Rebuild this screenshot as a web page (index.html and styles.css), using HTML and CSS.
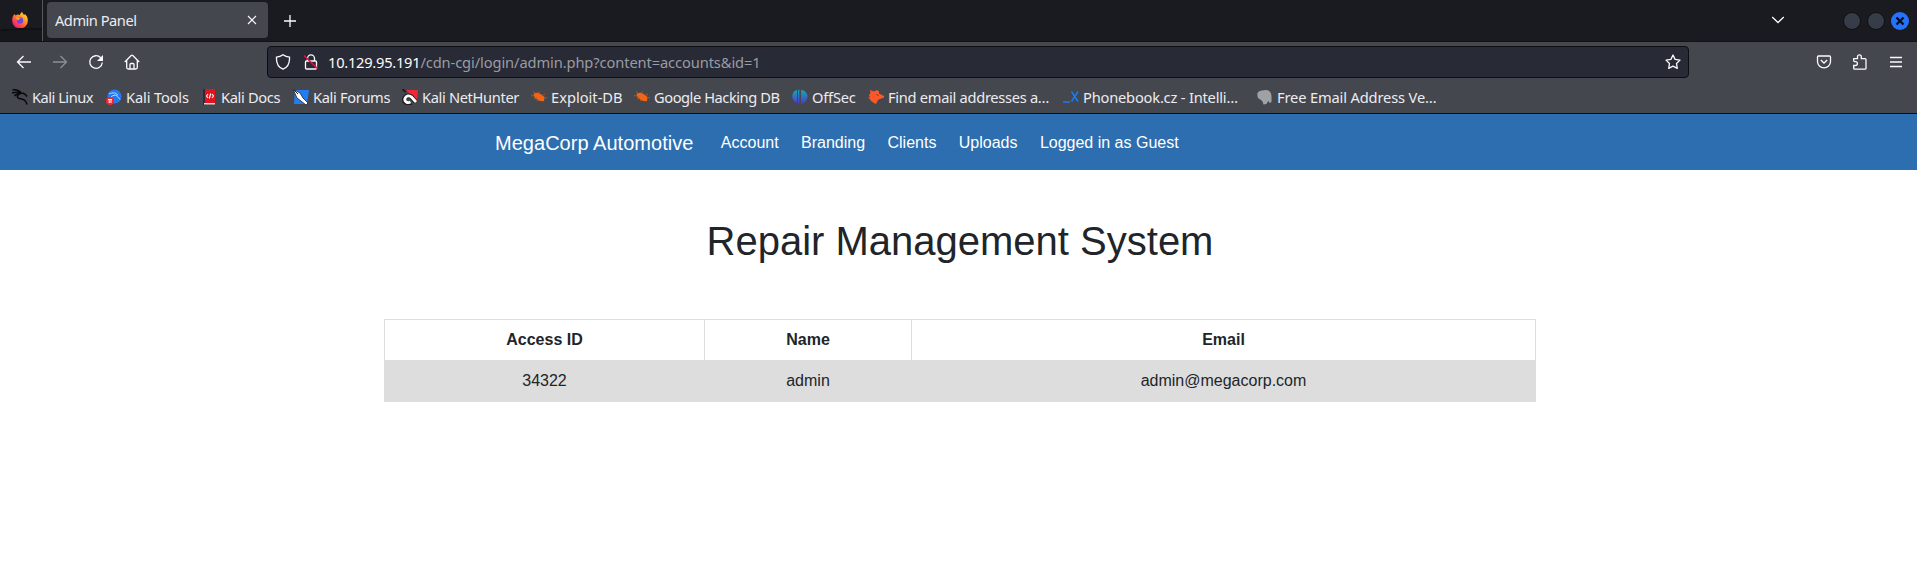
FILE: index.html
```html
<!DOCTYPE html>
<html lang="en">
<head>
<meta charset="utf-8">
<title>Admin Panel</title>
<link rel="stylesheet" href="styles.css">
</head>
<body>
<header class="browser">
  <div class="tabbar">
    <div class="fx">
      <svg width="16" height="16" viewBox="0 0 16 16"><defs><linearGradient id="ff" x1="1" y1="0" x2="0.2" y2="1"><stop offset="0" stop-color="#fff04a"/><stop offset=".4" stop-color="#ff9a1f"/><stop offset=".75" stop-color="#ff4050"/><stop offset="1" stop-color="#e3158a"/></linearGradient></defs><path fill="url(#ff)" d="M1 4l1.500-2 1 1.500 1.500-.8C6 2.400 7 3 8 3c0-1.500 1-2.500 2.300-3 .2 1.600 1.200 2.300 2 3l.6-1C15 4 16 6 15.800 9A7.800 7.300 0 0 1 .2 9C0 7 .4 5.500 1 4z"/><circle cx="8" cy="8.500" r="3.200" fill="#7542e5"/><path d="M3.500 5.500c2-1 4-.5 5 1L6.500 8c-1 .7-1.600 0-3-2.500z" fill="#ff9a28"/></svg>
    </div>
    <div class="tab"><span class="tab-title">Admin Panel</span>
      <svg width="10" height="10" viewBox="0 0 10 10"><path d="M1 1l8 8M9 1L1 9" class="line thin"/></svg>
    </div>
    <svg class="plus" width="12" height="12" viewBox="0 0 12 12"><path d="M6 0v12M0 6h12" class="line"/></svg>
    <svg class="chev" width="14" height="8" viewBox="0 0 14 8"><path d="M1.200 1l5.800 5.500L12.800 1" class="line"/></svg>
    <div class="winbtns"><i class="win"></i><i class="win"></i><i class="win close"><svg width="10" height="10" viewBox="0 0 10 10"><path d="M1.500 1.500l7 7M8.500 1.500l-7 7" stroke="#080d18" stroke-width="2.300"/></svg></i></div>
  </div>
  <div class="toolbar">
    <div class="navbtns">
      <svg width="16" height="16" viewBox="0 0 16 16"><path d="M15 8H1.500M7.500 2L1.500 8l6 6" class="line"/></svg>
      <svg class="dim" width="16" height="16" viewBox="0 0 16 16"><path d="M1 8h13.500M8.500 2l6 6-6 6" class="line"/></svg>
      <svg width="16" height="16" viewBox="0 0 16 16"><path d="M12.700 3.800A6.300 6.300 0 1 0 14.300 8.500" class="line"/><path d="M15 1v6H9z" fill="#fbfbfe"/></svg>
      <svg width="16" height="16" viewBox="0 0 16 16"><path d="M.8 8L7.200 1.500q.8-.7 1.600 0L15.200 8M2.700 6.500v7q0 1.500 1.500 1.500h7.600q1.500 0 1.500-1.500v-7M6 15v-4.500q0-1 1-1h2q1 0 1 1V15" class="line"/></svg>
    </div>
    <div class="urlbar">
      <svg width="16" height="16" viewBox="0 0 16 16"><path d="M8 .8c2 1.500 4 2.200 6.500 2.400.3 5-1.300 10-6.500 12C2.800 13.200 1.200 8.200 1.500 3.200 4 3 6 2.300 8 .8z" class="line"/></svg>
      <svg class="lock" width="16" height="16" viewBox="0 0 16 16"><path d="M4.500 7V4.500a3.500 3.700 0 0 1 7 0V7M3.500 7h9q1 0 1 1v6q0 1-1 1h-9q-1 0-1-1V8q0-1 1-1z" class="line"/><path d="M1 1.500l13.500 13" stroke="#e80d43" stroke-width="1.600"/></svg>
      <span class="url"><b class="host">10.129.95.191</b>/cdn-cgi/login/admin.php?content=accounts&amp;id=1</span>
      <svg class="star" width="16" height="16" viewBox="0 0 16 16"><path d="M8 1l2.100 4.400 4.900.7-3.500 3.400.8 4.900L8 12.100l-4.300 2.300.8-4.900L1 6.100l4.900-.7z" class="line" stroke-linejoin="round"/></svg>
    </div>
    <div class="tools">
      <svg width="16" height="16" viewBox="0 0 16 16"><path d="M2.500 2h11q1 0 1 1v4.500a6.500 6.300 0 0 1-13 0V3q0-1 1-1zM4.800 6L8 9l3.200-3" class="line"/></svg>
      <svg width="16" height="16" viewBox="0 0 16 16"><path d="M1.700 6.500V4.700h3.800V2.700a1.900 1.900 0 0 1 3.800 0v2h3.700q1 0 1 1v8.500q0 1-1 1H2.700q-1 0-1-1V11.500h1.800a1.900 1.900 0 0 0 0-3.800q-1.800 0-1.800-1.200z" class="line"/></svg>
      <svg width="16" height="16" viewBox="0 0 16 16"><path d="M2 3.500h12M2 8h12M2 12.500h12" class="line"/></svg>
    </div>
  </div>
  <nav class="bookmarks">
    <div class="bm b1"><svg width="16" height="16" viewBox="0 0 16 16"><path d="M.5 1C3 .5 7 1.500 9.500 4M0 4c3-1 6-1.500 9.500.2M2.500 7C5 4.500 8 4 12 4.500M9 4.500c-4 1-5 4-1.500 5 4 .8 6.500 1.500 7.500 6M11 4c1.500.5 2.500 1 4 3.500" fill="none" stroke="#08090b" stroke-width="1.500"/></svg><span>Kali Linux</span></div>
    <div class="bm b2"><svg width="16" height="16" viewBox="0 0 16 16"><circle cx="8.500" cy="7.500" r="7" fill="#2878ed"/><path d="M3 5c4-2 7-1 9 1M5 8c2-2 4-2 6-1.500 0 2 2 1.500 3 4" fill="none" stroke="#b9dcff"/><circle cx="4" cy="12" r="4" fill="#ef2630"/><path d="M2 10.500h4M3.200 10.500V14M5 10.500V14" stroke="#fff"/></svg><span>Kali Tools</span></div>
    <div class="bm b3"><svg width="16" height="16" viewBox="0 0 16 16"><path fill="#3a2440" d="M2 0h3v16H2z"/><path fill="#e3131b" d="M4 0h10v14H4z"/><path fill="#d8d9db" d="M3 14h11v1.500H3z"/><path d="M7 5L5.500 7 7 9M11 5l1.500 2L11 9M9.700 4.500l-1.400 5" fill="none" stroke="#fff" stroke-width="1.100"/></svg><span>Kali Docs</span></div>
    <div class="bm b4"><svg width="16" height="16" viewBox="0 0 16 16"><path fill="#247cf4" d="M2 1h14l-2 14H1z"/><path d="M0 0l7 4 3 5 5 5-2 2-5-4-4-3z" fill="#fff" stroke="#202126" stroke-width=".8"/><path d="M1 1l4 4" stroke="#202126"/></svg><span>Kali Forums</span></div>
    <div class="bm b5"><svg width="16" height="16" viewBox="0 0 16 16"><path fill="#ed2735" d="M4 1h12l-1 12z"/><path d="M9 13.500c-3 2-7.500 0-6.500-3.500s5-4 7-2l4.500 5" fill="none" stroke="#1e1d22" stroke-width="4.600"/><path d="M8.500 13c-3 1.500-6.500-.5-5.500-3.500s4.500-3.500 6.500-1.500l4.500 5" fill="none" stroke="#fff" stroke-width="2.800"/><path d="M0 0l4 3" stroke="#1e1d22" stroke-width="2"/></svg><span>Kali NetHunter</span></div>
    <div class="bm b6"><svg width="16" height="16" viewBox="0 0 16 16"><path d="M2.500 5q4-2.500 7 0l4 3-.5 4q-4 1-7-1.500Q2.500 8 2.500 5z" fill="#f36516"/><path d="M0 6.500l4 1M4 4L2 2.500M8 5V2.500M11 6.500l3-1.500M3 10l3-1M6 12.500l2-2M13 9l3-.5" stroke="#a95528"/></svg><span>Exploit-DB</span></div>
    <div class="bm b7"><svg width="16" height="16" viewBox="0 0 16 16"><path d="M2.500 5q4-2.500 7 0l4 3-.5 4q-4 1-7-1.500Q2.500 8 2.500 5z" fill="#f36516"/><path d="M0 6.500l4 1M4 4L2 2.500M8 5V2.500M11 6.500l3-1.500M3 10l3-1M6 12.500l2-2M13 9l3-.5" stroke="#a95528"/></svg><span>Google Hacking DB</span></div>
    <div class="bm b8"><svg width="16" height="16" viewBox="0 0 16 16"><defs><linearGradient id="of" x1="0" y1="0" x2="0" y2="1"><stop offset="0" stop-color="#12a9b4"/><stop offset="1" stop-color="#5534ca"/></linearGradient></defs><path d="M5 1v13Q0 12 .3 7T5 1zM6 .8h1.300v14L6 14.500zM9 1q7 1 6.500 7.500Q14 14 9 15z" fill="url(#of)"/></svg><span>OffSec</span></div>
    <div class="bm b9"><svg width="16" height="16" viewBox="0 0 16 16"><path fill="#ff5726" d="M2 1l4 1.500L9 1l2 1.500v2l5 2.500v1.500L12 10l-2 1-2 4-2-1-3-2-1-2-2-1 2-1-1-2 1.500-2z"/><path d="M8.500 5.500l2 1" stroke="#45474e"/></svg><span>Find email addresses a…</span></div>
    <div class="bm b10"><svg width="16" height="16" viewBox="0 0 16 16"><path d="M0 13h7M8.500 2.500l6.500 10M15 2.500l-6.500 10" stroke="#167df0" stroke-width="1.600"/></svg><span>Phonebook.cz - Intelli…</span></div>
    <div class="bm b11"><svg width="16" height="16" viewBox="0 0 16 16"><path fill="#a0a1a3" d="M5 1.500q9-2 9.500 5.500v6l-2 1-1-2-1 1-1 2-3 .5-1-3L4 11 1 9Q-1 3 3 2z"/></svg><span>Free Email Address Ve…</span></div>
  </nav>
</header>
<div class="sitebar">
  <a class="brand">MegaCorp Automotive</a>
  <a>Account</a><a>Branding</a><a>Clients</a><a>Uploads</a><a>Logged in as Guest</a>
</div>
<main class="page">
  <h1>Repair Management System</h1>
  <table class="accounts">
    <colgroup><col class="c1"><col class="c2"><col class="c3"></colgroup>
    <tr><th>Access ID</th><th>Name</th><th>Email</th></tr>
    <tr class="shade"><td>34322</td><td>admin</td><td>admin@megacorp.com</td></tr>
  </table>
</main>
</body>
</html>
```
FILE: styles.css
```css
* { box-sizing: border-box; }
body { margin: 0; background: #fff; color: #212529; font: 16px/24px "Liberation Sans", Arial, sans-serif; overflow: hidden; height: 574px; }
svg { display: block; flex: none; }
.line { fill: none; stroke: #fbfbfe; stroke-width: 1.3; }
.thin { stroke-width: 1.1; }
.browser { height: 114px; background: #45474e; border-bottom: 1px solid #0c0e12; font-family: "Noto Sans", sans-serif; font-size: 14.67px; color: #ececf0; }
.tabbar { height: 42px; background: #1a1b20; border-bottom: 1px solid #101216; display: flex; align-items: center; }
.fx { width: 43px; height: 41px; border-right: 1px solid #57585c; padding: 12px 0 0 12px; background: radial-gradient(ellipse 75px 14px at 34px 42px, #15171a 88%, #0e1013 90%, #0e1013 98%, transparent 100%); }
.tab { width: 221px; height: 36px; margin: -1px 0 0 4px; padding: 0 8px; background: #45474e; border-radius: 4px; display: flex; align-items: center; justify-content: space-between; padding-right: 11px; }
.tab-title { letter-spacing: -.5px; white-space: nowrap; }
.plus { margin-left: 16px; }
.chev { margin-left: auto; margin-top: -2px; }
.winbtns { display: flex; gap: 6px; margin: 0 8px 0 58px; }
.win { width: 18px; height: 18px; border-radius: 50%; background: #373c49; border: 1px solid #0d0f12; }
.close { background: #2673fb; border: 0; display: grid; place-items: center; }
.toolbar { height: 40px; display: flex; align-items: center; }
.navbtns { display: flex; gap: 20px; padding-left: 16px; width: 267px; }
.dim { opacity: .4; }
.urlbar { width: 1422px; height: 32px; background: #282a36; border: 1px solid #0c0e14; border-radius: 4px; padding: 0 7px; display: flex; align-items: center; }
.lock { margin-left: 12px; }
.url { margin-left: 9px; color: #9b9ca3; white-space: nowrap; letter-spacing: -.1px; }
.host { font-weight: 400; color: #fbfbfe; letter-spacing: -.25px; }
.star { margin-left: auto; }
.tools { display: flex; gap: 20px; margin-left: 127px; }
.bookmarks { display: flex; height: 30px; padding-left: 12px; align-items: center; }
.bm { display: flex; gap: 4px; align-items: center; flex: none; white-space: nowrap; }
.b1 { width: 94px; letter-spacing: -.5px; }
.b2 { width: 95px; letter-spacing: -.15px; }
.b3 { width: 92px; letter-spacing: -.35px; }
.b4 { width: 109px; letter-spacing: -.35px; }
.b5 { width: 129px; letter-spacing: -.35px; }
.b6 { width: 103px; }
.b7 { width: 158px; letter-spacing: -.45px; }
.b8 { width: 76px; letter-spacing: -.2px; }
.b9 { width: 195px; letter-spacing: -.3px; }
.b10 { width: 194px; letter-spacing: -.2px; }
.b11 { width: 190px; letter-spacing: -.15px; }
.sitebar { height: 56px; background: #2c6eaf; color: #fff; display: flex; align-items: center; gap: 22.4px; padding: 2px 0 0 495px; }
.brand { font-size: 20px; line-height: 30px; margin-right: 5px; letter-spacing: .03px; }
.page { padding-top: 47px; }
h1 { margin: 0 0 54px; padding-left: 3px; font-size: 40px; font-weight: 400; line-height: 48px; text-align: center; }
.accounts { width: 1152px; margin: 0 auto 0 384px; border-collapse: collapse; table-layout: fixed; text-align: center; }
.c1 { width: 320px; }
.c2 { width: 207px; }
th, td { border: 1px solid #ddd; padding: 8px; height: 41px; }
.shade { background: #ddd; }
```
